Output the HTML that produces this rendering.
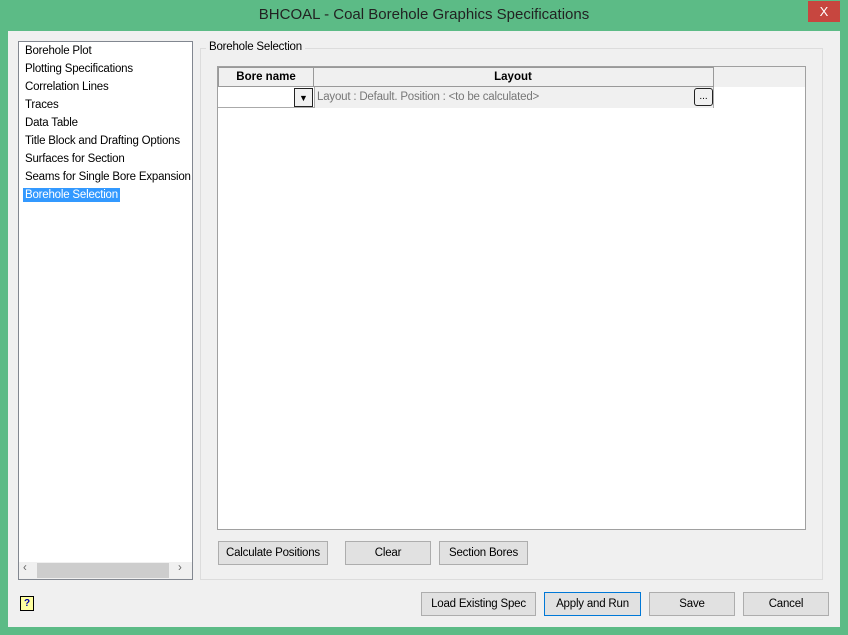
<!DOCTYPE html>
<html><head><style>
*{box-sizing:border-box;margin:0;padding:0}
body{width:848px;height:635px;background:#5cbb86;font-family:"Liberation Sans",sans-serif;font-size:11.5px;color:#000;position:relative;overflow:hidden}
.a{position:absolute}
.title{left:0;top:6px;width:848px;text-align:center;font-size:15px;color:#222}
.close{left:808px;top:1px;width:32px;height:21px;background:#c7463f;color:#fff;text-align:center;font-size:13px;line-height:21px}
.client{left:8px;top:31px;width:832px;height:596px;background:#f0f0f0}
.list{left:18px;top:41px;width:175px;height:539px;background:#fff;border:1px solid #828790}
.list div{height:18px;line-height:19px;padding-left:6px;white-space:nowrap;overflow:hidden;letter-spacing:-0.2px}
.sel span{background:#3399ff;color:#fff;padding:1px 2px;margin-left:-2px}
.btn{background:#e1e1e1;border:1px solid #adadad;text-align:center;line-height:22px;height:24px;letter-spacing:-0.2px}
.grp{left:200px;top:48px;width:623px;height:532px;border:1px solid #dcdcdc}
</style></head><body>
<div class="a title">BHCOAL - Coal Borehole Graphics Specifications</div>
<div class="a close">X</div>
<div class="a client"></div>
<div class="a list">
<div>Borehole Plot</div><div>Plotting Specifications</div><div>Correlation Lines</div><div>Traces</div><div>Data Table</div><div>Title Block and Drafting Options</div><div>Surfaces for Section</div><div>Seams for Single Bore Expansion</div><div class="sel"><span>Borehole Selection</span></div>
</div>
<div class="a" style="left:19px;top:562px;width:173px;height:17px;background:#f0f0f0"></div>
<div class="a" style="left:37px;top:563px;width:132px;height:15px;background:#cdcdcd"></div>
<div class="a" style="left:23px;top:562px;color:#666">‹</div>
<div class="a" style="left:178px;top:562px;color:#666">›</div>
<div class="a grp"></div>
<div class="a" style="left:206px;top:41px;background:#f0f0f0;padding:0 3px;letter-spacing:-0.2px">Borehole Selection</div>
<div class="a" style="left:217px;top:66px;width:589px;height:464px;background:#fff;border:1px solid #a0a0a0"></div>
<div class="a" style="left:218px;top:67px;width:587px;height:20px;background:#f0f0f0"></div>
<div class="a" style="left:218px;top:67px;width:96px;height:20px;border:1px solid #999;font-weight:bold;text-align:center;line-height:18px">Bore name</div>
<div class="a" style="left:313px;top:67px;width:401px;height:20px;border:1px solid #999;border-left:none;font-weight:bold;text-align:center;line-height:18px">Layout</div>
<div class="a" style="left:218px;top:87px;width:496px;height:21px;border-bottom:1px solid #aaa"></div>
<div class="a" style="left:314px;top:87px;width:400px;height:21px;background:#f0f0f0;border-left:1px solid #aaa;border-right:1px solid #aaa;color:#777;line-height:20px;padding-left:2px;letter-spacing:-0.2px">Layout : Default. Position : &lt;to be calculated&gt;</div>
<div class="a" style="left:294px;top:88px;width:19px;height:19px;border:1px solid #222;background:#f0f0f0;text-align:center;font-size:9px;line-height:18px">▼</div>
<div class="a" style="left:694px;top:88px;width:19px;height:18px;border:1px solid #222;border-radius:3px;background:#f0f0f0;text-align:center;font-size:10px;line-height:15px">...</div>
<div class="a btn" style="left:218px;top:541px;width:110px">Calculate Positions</div>
<div class="a btn" style="left:345px;top:541px;width:86px">Clear</div>
<div class="a btn" style="left:439px;top:541px;width:89px">Section Bores</div>
<div class="a" style="left:20px;top:596px;width:14px;height:15px;border:1px solid #000;background:#ffffa0;font-size:10px;font-weight:bold;text-align:center;line-height:13px;color:#00a">?</div>
<div class="a btn" style="left:421px;top:592px;width:115px">Load Existing Spec</div>
<div class="a btn" style="left:544px;top:592px;width:97px;border-color:#0078d7">Apply and Run</div>
<div class="a btn" style="left:649px;top:592px;width:86px">Save</div>
<div class="a btn" style="left:743px;top:592px;width:86px">Cancel</div>
</body></html>
